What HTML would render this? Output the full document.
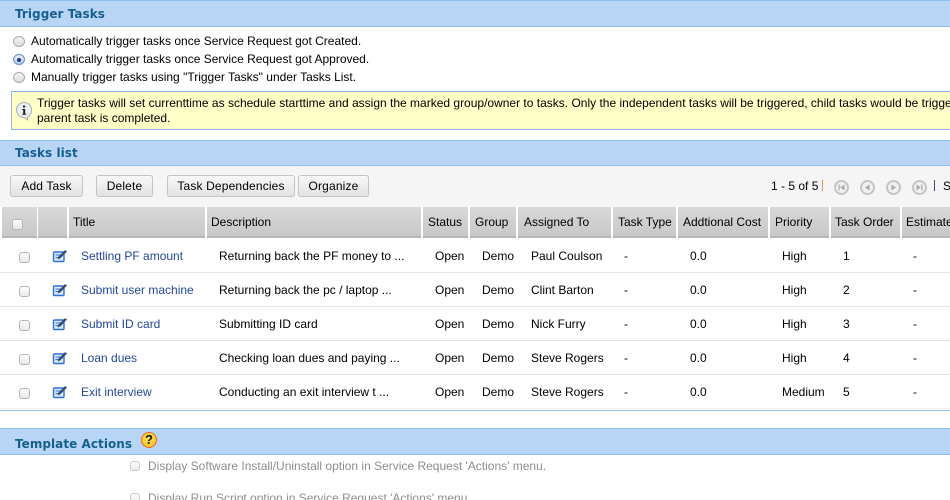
<!DOCTYPE html>
<html><head><meta charset="utf-8"><style>
html,body{margin:0;padding:0;background:#fff;width:950px;height:500px;overflow:hidden;font-family:"Liberation Sans",sans-serif;font-size:12px;color:#000}
#p{position:relative;width:950px;height:500px;overflow:hidden}
.a{position:absolute;white-space:nowrap}
.band{position:absolute;left:0;width:950px;background:#b9d5f5;border-top:1px solid #8fbdee;border-bottom:1px solid #8fbdee;box-sizing:border-box}
.bt{position:absolute;left:15px;font:bold 12px "DejaVu Sans",sans-serif;letter-spacing:.05px;color:#15608f;white-space:nowrap}
.r{position:absolute;left:13px;width:12px;height:11px;border-radius:50%;border:1px solid #aaa;box-sizing:border-box;background:linear-gradient(#f4f4f4,#ddd)}
.btn{position:absolute;top:175px;height:22px;box-sizing:border-box;border:1px solid #c4c4c4;border-radius:3px;background:linear-gradient(#f8f8f8,#e2e2e2);text-align:center;line-height:21px;letter-spacing:.15px;white-space:nowrap}
.th{position:absolute;top:207px;height:31px;background:linear-gradient(#d8d8d8,#c8c8c8);border-bottom:2px solid #b8b8b8;box-sizing:border-box;padding-left:4px;line-height:31px;white-space:nowrap;overflow:hidden}
.cb{position:absolute;width:9px;height:9px;border:1px solid #b5b5b5;border-radius:3px;background:linear-gradient(#fff,#e8e8e8);box-sizing:content-box}
.line{position:absolute;left:0;width:950px;height:1px;background:#e6e6e6}
.c{position:absolute;white-space:nowrap}
.l{color:#24479b}
.nav{position:absolute;top:180px;width:15px;height:15px;border-radius:50%;border:2px solid #c4c4c4;background:#f0f0f0;box-sizing:border-box}
.nav svg{position:absolute;left:1px;top:1px}
</style></head><body><div id="p">

<div class="band" style="top:0;height:27px"></div>
<div class="bt" style="top:7px">Trigger Tasks</div>

<div class="r" style="top:36px"></div>
<span class="c" style="left:31px;top:34px">Automatically trigger tasks once Service Request got Created.</span>
<div class="r" style="top:54px;border-color:#6c8fc0;background:linear-gradient(#e8eefa,#b5cbee)"><div class="a" style="left:3px;top:3px;width:4px;height:4px;border-radius:50%;background:#1f3f78"></div></div>
<span class="c" style="left:31px;top:52px">Automatically trigger tasks once Service Request got Approved.</span>
<div class="r" style="top:72px"></div>
<span class="c" style="left:31px;top:70px">Manually trigger tasks using "Trigger Tasks" under Tasks List.</span>

<div class="a" style="left:11px;top:91px;width:945px;height:39px;background:#ffffc8;border:1px solid #8fb8e0;box-sizing:border-box"></div>
<svg class="a" style="left:15px;top:101px" width="19" height="20" viewBox="0 0 19 20"><path d="M9.500 1.500C5 1.500 1.500 4.800 1.500 9c0 4.200 3.500 7.500 8 7.500l3 2.500v-3.200c2.400-1.300 4-3.800 4-6.800 0-4.200-3-7.500-7.500-7.500z" fill="#eef0f2" stroke="#a8b0b8"/><rect x="8" y="4.500" width="2.200" height="2" fill="#222"/><path d="M7.200 8h3v4.800h1v1H7.200v-1h1V9h-1z" fill="#222"/></svg>
<span class="c" style="left:37px;top:96px">Trigger tasks will set currenttime as schedule starttime and assign the marked group/owner to tasks. Only the independent tasks will be triggered, child tasks would be triggered after the</span>
<span class="c" style="left:37px;top:111px">parent task is completed.</span>

<div class="band" style="top:140px;height:26px"></div>
<div class="bt" style="top:146px">Tasks list</div>

<div class="a" style="left:0;top:166px;width:950px;height:41px;background:#f5f5f5"></div>
<div class="btn" style="left:10px;width:73px">Add Task</div>
<div class="btn" style="left:96px;width:57px">Delete</div>
<div class="btn" style="left:167px;width:128px">Task Dependencies</div>
<div class="btn" style="left:298px;width:71px">Organize</div>

<span class="c" style="left:771px;top:179px">1 - 5 of 5</span>
<div class="a" style="left:822px;top:180px;width:1px;height:11px;background:#d9a050"></div>
<div class="nav" style="left:834px"><svg width="9" height="9"><path d="M1.500 1.500h1.200v6H1.500zM7.500 1.500v6L3.200 4.500z" fill="#aaa"/></svg></div>
<div class="nav" style="left:860px"><svg width="9" height="9"><path d="M6.500 1.500v6L2 4.500z" fill="#aaa"/></svg></div>
<div class="nav" style="left:886px"><svg width="9" height="9"><path d="M2.500 1.500v6l4.500-3z" fill="#aaa"/></svg></div>
<div class="nav" style="left:912px"><svg width="9" height="9"><path d="M1.500 1.500v6l4.300-3zM6.300 1.500h1.200v6H6.300z" fill="#aaa"/></svg></div>
<div class="a" style="left:934px;top:180px;width:1px;height:11px;background:#5a3a7a"></div>
<span class="c" style="left:943px;top:179px">S</span>

<div class="th" style="left:2px;width:35px"></div>
<div class="cb" style="left:12px;top:219px"></div>
<div class="th" style="left:38px;width:29px"></div>
<div class="th" style="left:69px;width:136px">Title</div>
<div class="th" style="left:207px;width:214px">Description</div>
<div class="th" style="left:423px;width:45px;padding-left:5px">Status</div>
<div class="th" style="left:470px;width:46px;padding-left:5px">Group</div>
<div class="th" style="left:518px;width:93px;padding-left:6px">Assigned To</div>
<div class="th" style="left:613px;width:63px;padding-left:5px">Task Type</div>
<div class="th" style="left:678px;width:90px;padding-left:5px">Addtional Cost</div>
<div class="th" style="left:770px;width:59px;padding-left:5px">Priority</div>
<div class="th" style="left:831px;width:69px">Task Order</div>
<div class="th" style="left:902px;width:60px">Estimate</div>

<!-- row 1 -->
<div class="cb" style="left:19px;top:252px"></div>
<svg class="a" style="left:52px;top:249px" width="16" height="14" viewBox="0 0 16 14"><rect x="1.500" y="3" width="10.500" height="9.500" rx="1" fill="#dbe8fb" stroke="#2f6fe0" stroke-width="1.400"/><path d="M3.500 6h6M3.500 8.500h3" stroke="#2f6fe0"/><path d="M5.500 10.500l.8-2.800L12.800 1.200l2.400 1-6.700 7z" fill="#34506c"/></svg>
<span class="c l" style="left:81px;top:249px">Settling PF amount</span>
<span class="c" style="left:219px;top:249px">Returning back the PF money to ...</span>
<span class="c" style="left:435px;top:249px">Open</span>
<span class="c" style="left:482px;top:249px">Demo</span>
<span class="c" style="left:531px;top:249px">Paul Coulson</span>
<span class="c" style="left:624px;top:249px">-</span>
<span class="c" style="left:690px;top:249px">0.0</span>
<span class="c" style="left:782px;top:249px">High</span>
<span class="c" style="left:843px;top:249px">1</span>
<span class="c" style="left:913px;top:249px">-</span>
<div class="line" style="top:272px"></div>

<!-- row 2 -->
<div class="cb" style="left:19px;top:286px"></div>
<svg class="a" style="left:52px;top:283px" width="16" height="14" viewBox="0 0 16 14"><rect x="1.500" y="3" width="10.500" height="9.500" rx="1" fill="#dbe8fb" stroke="#2f6fe0" stroke-width="1.400"/><path d="M3.500 6h6M3.500 8.500h3" stroke="#2f6fe0"/><path d="M5.500 10.500l.8-2.800L12.800 1.200l2.400 1-6.700 7z" fill="#34506c"/></svg>
<span class="c l" style="left:81px;top:283px">Submit user machine</span>
<span class="c" style="left:219px;top:283px">Returning back the pc / laptop ...</span>
<span class="c" style="left:435px;top:283px">Open</span>
<span class="c" style="left:482px;top:283px">Demo</span>
<span class="c" style="left:531px;top:283px">Clint Barton</span>
<span class="c" style="left:624px;top:283px">-</span>
<span class="c" style="left:690px;top:283px">0.0</span>
<span class="c" style="left:782px;top:283px">High</span>
<span class="c" style="left:843px;top:283px">2</span>
<span class="c" style="left:913px;top:283px">-</span>
<div class="line" style="top:306px"></div>

<!-- row 3 -->
<div class="cb" style="left:19px;top:320px"></div>
<svg class="a" style="left:52px;top:317px" width="16" height="14" viewBox="0 0 16 14"><rect x="1.500" y="3" width="10.500" height="9.500" rx="1" fill="#dbe8fb" stroke="#2f6fe0" stroke-width="1.400"/><path d="M3.500 6h6M3.500 8.500h3" stroke="#2f6fe0"/><path d="M5.500 10.500l.8-2.800L12.800 1.200l2.400 1-6.700 7z" fill="#34506c"/></svg>
<span class="c l" style="left:81px;top:317px">Submit ID card</span>
<span class="c" style="left:219px;top:317px">Submitting ID card</span>
<span class="c" style="left:435px;top:317px">Open</span>
<span class="c" style="left:482px;top:317px">Demo</span>
<span class="c" style="left:531px;top:317px">Nick Furry</span>
<span class="c" style="left:624px;top:317px">-</span>
<span class="c" style="left:690px;top:317px">0.0</span>
<span class="c" style="left:782px;top:317px">High</span>
<span class="c" style="left:843px;top:317px">3</span>
<span class="c" style="left:913px;top:317px">-</span>
<div class="line" style="top:340px"></div>

<!-- row 4 -->
<div class="cb" style="left:19px;top:354px"></div>
<svg class="a" style="left:52px;top:351px" width="16" height="14" viewBox="0 0 16 14"><rect x="1.500" y="3" width="10.500" height="9.500" rx="1" fill="#dbe8fb" stroke="#2f6fe0" stroke-width="1.400"/><path d="M3.500 6h6M3.500 8.500h3" stroke="#2f6fe0"/><path d="M5.500 10.500l.8-2.800L12.800 1.200l2.400 1-6.700 7z" fill="#34506c"/></svg>
<span class="c l" style="left:81px;top:351px">Loan dues</span>
<span class="c" style="left:219px;top:351px">Checking loan dues and paying ...</span>
<span class="c" style="left:435px;top:351px">Open</span>
<span class="c" style="left:482px;top:351px">Demo</span>
<span class="c" style="left:531px;top:351px">Steve Rogers</span>
<span class="c" style="left:624px;top:351px">-</span>
<span class="c" style="left:690px;top:351px">0.0</span>
<span class="c" style="left:782px;top:351px">High</span>
<span class="c" style="left:843px;top:351px">4</span>
<span class="c" style="left:913px;top:351px">-</span>
<div class="line" style="top:374px"></div>

<!-- row 5 -->
<div class="cb" style="left:19px;top:388px"></div>
<svg class="a" style="left:52px;top:385px" width="16" height="14" viewBox="0 0 16 14"><rect x="1.500" y="3" width="10.500" height="9.500" rx="1" fill="#dbe8fb" stroke="#2f6fe0" stroke-width="1.400"/><path d="M3.500 6h6M3.500 8.500h3" stroke="#2f6fe0"/><path d="M5.500 10.500l.8-2.800L12.800 1.200l2.400 1-6.700 7z" fill="#34506c"/></svg>
<span class="c l" style="left:81px;top:385px">Exit interview</span>
<span class="c" style="left:219px;top:385px">Conducting an exit interview t ...</span>
<span class="c" style="left:435px;top:385px">Open</span>
<span class="c" style="left:482px;top:385px">Demo</span>
<span class="c" style="left:531px;top:385px">Steve Rogers</span>
<span class="c" style="left:624px;top:385px">-</span>
<span class="c" style="left:690px;top:385px">0.0</span>
<span class="c" style="left:782px;top:385px">Medium</span>
<span class="c" style="left:843px;top:385px">5</span>
<span class="c" style="left:913px;top:385px">-</span>
<div class="line" style="top:408px;background:#efefef"></div>
<div class="a" style="left:0;top:410px;width:950px;height:1px;background:#8fbdee"></div>

<div class="band" style="top:428px;height:27px"></div>
<div class="bt" style="top:437px">Template Actions</div>
<div class="a" style="left:141px;top:432px;width:16px;height:16px;border-radius:50%;background:radial-gradient(circle at 50% 40%,#ffe25a,#fbbf10);border:1px solid #e8662a;box-sizing:border-box;text-align:center;font:bold 13px/14px 'Liberation Sans',sans-serif;color:#111">?</div>

<div class="cb" style="left:130px;top:461px;border-color:#ccc;width:8px;height:8px"></div>
<span class="c" style="left:148px;top:459px;color:#8e8e8e">Display Software Install/Uninstall option in Service Request 'Actions' menu.</span>
<div class="cb" style="left:130px;top:493px;border-color:#ccc;width:8px;height:8px"></div>
<span class="c" style="left:148px;top:491px;color:#8e8e8e">Display Run Script option in Service Request 'Actions' menu.</span>
</div></body></html>
